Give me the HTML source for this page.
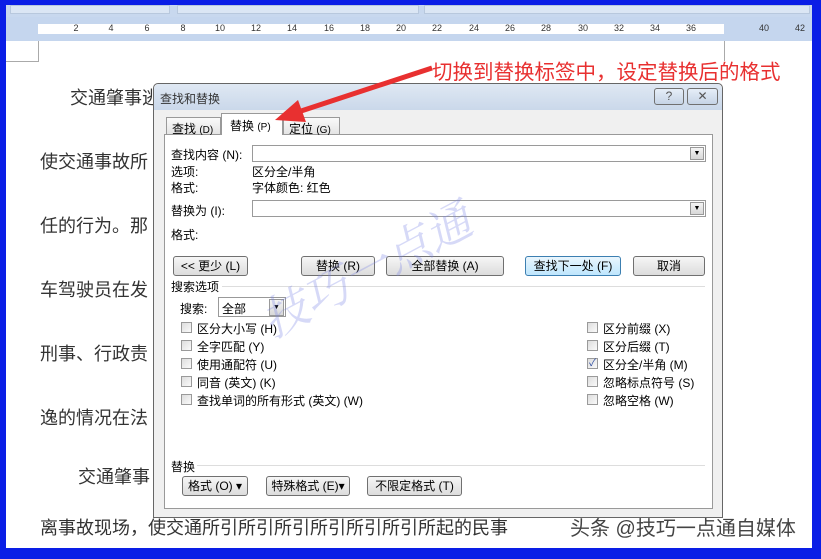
<!DOCTYPE html>
<html><head><meta charset="utf-8"><style>
*{margin:0;padding:0;box-sizing:border-box}
body{width:821px;height:559px;overflow:hidden;background:#0a1ee6;position:relative;font-family:"Liberation Sans","Noto Sans CJK SC",sans-serif}
.a{position:absolute}
.doc{left:6px;top:5px;width:806px;height:543px;background:#fff}
.p{position:absolute;font-size:18px;color:#333;white-space:nowrap}
.dlg{left:153px;top:83px;width:570px;height:435px;background:#f0f0f0;border:1px solid #666;border-radius:5px 5px 0 0;font-size:12px;color:#000}
.tb{left:0;top:0;width:568px;height:26px;background:linear-gradient(#dfe8f3,#cad8ea);border-radius:5px 5px 0 0}
.btn{position:absolute;height:20px;border:1px solid #707070;border-radius:3px;background:linear-gradient(#f6f6f6,#dcdcdc);font-size:12px;text-align:center;line-height:18px}
.cb{position:absolute;width:11px;height:11px;border:1px solid #9a9a9a;background:linear-gradient(135deg,#ddd,#fafafa)}
.lbl{position:absolute;font-size:12px;white-space:nowrap}
.inp{position:absolute;height:17px;background:#fff;border:1px solid #9a9a9a}
.dd{position:absolute;right:1px;top:1px;width:14px;height:13px;background:linear-gradient(#f4f4f4,#d8d8d8);border:1px solid #999;font-size:7px;text-align:center;line-height:12px}
.rn{position:absolute;top:23px;font-size:9px;color:#333;transform:translateX(-50%)}
</style></head><body>
<div class="a doc"></div>
<div class="a" style="left:6px;top:5px;width:806px;height:12px;background:#c8d8ee"></div>
<div class="a" style="left:10px;top:5px;width:160px;height:9px;background:#dbe6f4;border:1px solid #b8c8dd"></div>
<div class="a" style="left:177px;top:5px;width:242px;height:9px;background:#dbe6f4;border:1px solid #b8c8dd"></div>
<div class="a" style="left:424px;top:5px;width:386px;height:9px;background:#dbe6f4;border:1px solid #b8c8dd"></div>
<div class="a" style="left:6px;top:17px;width:806px;height:24px;background:#c5d6ee"></div>
<div class="a" style="left:38px;top:24px;width:686px;height:10px;background:#fff"></div>
<div class="rn" style="left:76px">2</div><div class="rn" style="left:111px">4</div><div class="rn" style="left:147px">6</div><div class="rn" style="left:183px">8</div><div class="rn" style="left:220px">10</div><div class="rn" style="left:256px">12</div><div class="rn" style="left:292px">14</div><div class="rn" style="left:329px">16</div><div class="rn" style="left:365px">18</div><div class="rn" style="left:401px">20</div><div class="rn" style="left:437px">22</div><div class="rn" style="left:474px">24</div><div class="rn" style="left:510px">26</div><div class="rn" style="left:546px">28</div><div class="rn" style="left:583px">30</div><div class="rn" style="left:619px">32</div><div class="rn" style="left:655px">34</div><div class="rn" style="left:691px">36</div><div class="rn" style="left:764px">40</div><div class="rn" style="left:800px">42</div>
<div class="a" style="left:38px;top:41px;width:1px;height:20px;background:#aaa"></div>
<div class="a" style="left:6px;top:61px;width:33px;height:1px;background:#aaa"></div>
<div class="a" style="left:724px;top:41px;width:1px;height:20px;background:#aaa"></div>
<div class="p" style="left:70px;top:84px">交通肇事逃</div>
<div class="p" style="left:40px;top:148px">使交通事故所</div>
<div class="p" style="left:40px;top:212px">任的行为。那</div>
<div class="p" style="left:40px;top:276px">车驾驶员在发</div>
<div class="p" style="left:40px;top:340px">刑事、行政责</div>
<div class="p" style="left:40px;top:404px">逸的情况在法</div>
<div class="p" style="left:78px;top:463px">交通肇事</div>
<div class="p" style="left:40px;top:514px">离事故现场，使交通所引所引所引所引所引所引所起的民事</div>
<div class="p" style="left:570px;top:512px;color:#444;font-size:20px">头条 @技巧一点通自媒体</div>
<div class="p" style="left:432px;top:55px;color:#e83030;font-size:20.5px">切换到替换标签中，设定替换后的格式</div>
<div class="a dlg">
 <div class="a tb"></div>
 <div class="lbl" style="left:6px;top:6px;color:#333">查找和替换</div>
 <div class="btn" style="left:500px;top:4px;width:30px;height:17px;line-height:15px;color:#555;background:linear-gradient(#e6eef8,#c6d4e6)">?</div>
 <div class="btn" style="left:533px;top:4px;width:31px;height:17px;line-height:15px;color:#555;background:linear-gradient(#e6eef8,#c6d4e6)">✕</div>
 <div class="a" style="left:10px;top:50px;width:549px;height:375px;background:#fff;border:1px solid #999"></div>
 <div class="a" style="left:12px;top:33px;width:55px;height:18px;border:1px solid #999;background:linear-gradient(#fafafa,#e4e4e4);font-size:12px;padding:2px 5px">查找 <span style="font-size:10px">(D)</span></div>
 <div class="a" style="left:67px;top:29px;width:62px;height:22px;border:1px solid #999;border-bottom:none;background:#fff;font-size:12px;padding:3px 8px">替换 <span style="font-size:10px">(P)</span></div>
 <div class="a" style="left:129px;top:33px;width:57px;height:18px;border:1px solid #999;background:linear-gradient(#fafafa,#e4e4e4);font-size:12px;padding:2px 5px">定位 <span style="font-size:10px">(G)</span></div>
 <div class="lbl" style="left:17px;top:62px">查找内容 (N):</div>
 <div class="inp" style="left:98px;top:61px;width:454px"><div class="dd">▼</div></div>
 <div class="lbl" style="left:17px;top:79px">选项:</div>
 <div class="lbl" style="left:98px;top:79px">区分全/半角</div>
 <div class="lbl" style="left:17px;top:95px">格式:</div>
 <div class="lbl" style="left:98px;top:95px">字体颜色: 红色</div>
 <div class="lbl" style="left:17px;top:118px">替换为 (I):</div>
 <div class="inp" style="left:98px;top:116px;width:454px"><div class="dd">▼</div></div>
 <div class="lbl" style="left:17px;top:142px">格式:</div>
 <div class="btn" style="left:19px;top:172px;width:75px">&lt;&lt; 更少 (L)</div>
 <div class="btn" style="left:147px;top:172px;width:74px">替换 (R)</div>
 <div class="btn" style="left:232px;top:172px;width:118px">全部替换 (A)</div>
 <div class="btn" style="left:371px;top:172px;width:96px;border-color:#3c7fb1;background:linear-gradient(#eaf6fd,#bee6fd)">查找下一处 (F)</div>
 <div class="btn" style="left:479px;top:172px;width:72px">取消</div>
 <div class="lbl" style="left:17px;top:194px">搜索选项</div>
 <div class="a" style="left:68px;top:202px;width:483px;height:1px;background:#ddd"></div>
 <div class="lbl" style="left:26px;top:216px">搜索:</div>
 <div class="a" style="left:64px;top:213px;width:68px;height:20px;background:#fff;border:1px solid #999;font-size:12px;padding:2px 3px">全部<div class="dd" style="width:15px;height:17px;line-height:16px">▼</div></div>
 <div class="cb" style="left:27px;top:238px"></div><div class="lbl" style="left:43px;top:236px">区分大小写 (H)</div>
 <div class="cb" style="left:27px;top:256px"></div><div class="lbl" style="left:43px;top:254px">全字匹配 (Y)</div>
 <div class="cb" style="left:27px;top:274px"></div><div class="lbl" style="left:43px;top:272px">使用通配符 (U)</div>
 <div class="cb" style="left:27px;top:292px"></div><div class="lbl" style="left:43px;top:290px">同音 (英文) (K)</div>
 <div class="cb" style="left:27px;top:310px"></div><div class="lbl" style="left:43px;top:308px">查找单词的所有形式 (英文) (W)</div>
 <div class="cb" style="left:433px;top:238px"></div><div class="lbl" style="left:449px;top:236px">区分前缀 (X)</div>
 <div class="cb" style="left:433px;top:256px"></div><div class="lbl" style="left:449px;top:254px">区分后缀 (T)</div>
 <div class="cb" style="left:433px;top:274px;font-size:10px;line-height:9px;color:#2a4aa0;text-align:center">✓</div><div class="lbl" style="left:449px;top:272px">区分全/半角 (M)</div>
 <div class="cb" style="left:433px;top:292px"></div><div class="lbl" style="left:449px;top:290px">忽略标点符号 (S)</div>
 <div class="cb" style="left:433px;top:310px"></div><div class="lbl" style="left:449px;top:308px">忽略空格 (W)</div>
 <div class="lbl" style="left:17px;top:374px">替换</div>
 <div class="a" style="left:43px;top:381px;width:508px;height:1px;background:#ddd"></div>
 <div class="btn" style="left:28px;top:392px;width:66px">格式 (O) ▾</div>
 <div class="btn" style="left:112px;top:392px;width:84px">特殊格式 (E)▾</div>
 <div class="btn" style="left:213px;top:392px;width:95px">不限定格式 (T)</div>
</div>
<div class="a" style="left:250px;top:235px;font-size:46px;color:rgba(120,130,230,0.3);transform:rotate(-28deg);white-space:nowrap;font-family:'Liberation Serif','Noto Serif CJK SC',serif;font-style:italic">技巧一点通</div>
<svg class="a" style="left:270px;top:60px" width="170" height="70"><line x1="162" y1="8" x2="22" y2="54" stroke="#e83030" stroke-width="5"/><polygon points="5,60 28,40 36,62" fill="#e83030"/></svg>
</body></html>
